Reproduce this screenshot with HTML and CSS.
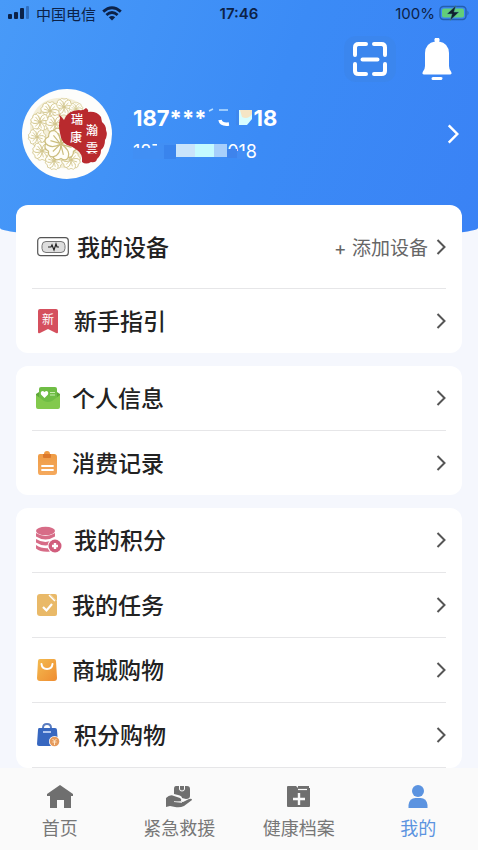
FILE: index.html
```html
<!DOCTYPE html>
<html lang="zh-CN">
<head>
<meta charset="utf-8">
<meta name="viewport" content="width=device-width, initial-scale=1">
<title>我的</title>
<link rel="stylesheet" href="styles.css">
</head>
<body>
<svg class="defs" aria-hidden="true">
  <symbol id="chevron" viewBox="0 0 10 18"><path d="M1.5 2 8.500 9 1.500 16" fill="none" stroke="currentColor" stroke-width="2"/></symbol>
</svg>
<div class="app">
  <div class="scroll">
    <header class="hero">
      <div class="status">
        <div class="status-side">
          <svg width="22" height="14" viewBox="0 0 22 14"><g fill="#0c2248"><rect x="0" y="8" width="4" height="5" rx="1"/><rect x="6" y="6" width="4" height="7" rx="1"/><rect x="12" y="2" width="4" height="11" rx="1"/></g><rect x="18" y="0" width="3" height="13" rx="1" fill="#2f6fc0"/></svg>
          <span class="carrier">中国电信</span>
          <svg width="20" height="15" viewBox="0 0 20 15"><g fill="none" stroke="#0c2248" stroke-width="2.800"><path d="M1.200 5.600Q10-2.200 18.800 5.600"/><path d="M4.400 9Q10 4 15.600 9"/></g><path d="M6.800 11.300Q10 8.600 13.200 11.300L10 14.500z" fill="#0c2248"/></svg>
        </div>
        <time class="clock">17:46</time>
        <div class="status-side status-end">
          <span class="percent">100%</span>
          <svg width="31" height="16" viewBox="0 0 31 16"><rect x="1" y="1.500" width="26" height="13" rx="3.500" fill="none" stroke="#245fae" stroke-width="1.400"/><rect x="3" y="3.500" width="22" height="9" rx="1.800" fill="#62ce79"/><path d="M28.500 5.500q2 2.500 0 5z" fill="#245fae"/><path d="M17 .5 8 9h5l-2 6.500L20 7h-5z" fill="#10202c" stroke="#4a9c9f" stroke-width=".5"/></svg>
        </div>
      </div>
      <div class="tools">
        <button class="tool tool-scan" aria-label="扫一扫"><svg width="34" height="34" viewBox="0 0 34 34"><g fill="none" stroke="#fff" stroke-width="4" stroke-linecap="round" stroke-linejoin="round"><path d="M2 13V5.500Q2 2 5.500 2H13M21 2h7.500Q32 2 32 5.500V13M32 22v7q0 3-3.500 3H21M13 32H5.500Q2 32 2 29v-7M9.500 17.500h15"/></g></svg></button>
        <button class="tool tool-bell" aria-label="消息"><svg width="32" height="42" viewBox="0 0 32 42"><path d="M14 0h4q1.500 2 0 3.500 9.500 1.500 10 11.500v13q0 3 2 5.500 1.500 3-1 3H3q-2.500 0-1-3 2-2.500 2-5.500V15Q4.500 5 14 3.500 12.500 2 14 0zM12 39h8q2 0 1.500 1.500T20 42h-8q-1.500 0-1.500-1.500T12 39z" fill="#fff"/></svg></button>
      </div>
      <a class="profile" href="#profile">
        <svg class="avatar" viewBox="0 0 90 90">
          <defs>
            <g id="petal" fill="#fffef8" stroke="#cbbd7d" stroke-width="1"><path d="M0 0Q-8-5-6-11-4-15 0-12 5-15 7-10 7-5 0 0zM0-1-2-9M0-1 3-9"/></g>
            <g id="flower"><use href="#petal"/><use href="#petal" transform="rotate(60)"/><use href="#petal" transform="rotate(120)"/><use href="#petal" transform="rotate(180)"/><use href="#petal" transform="rotate(240)"/><use href="#petal" transform="rotate(300)"/></g>
          </defs>
          <circle cx="45" cy="45" r="45" fill="#fdfdfb"/>
          <path d="M44 9C16 6 5 28 9 47c3 23 25 38 43 30 9-4 9-13 3-21L41 38C42 27 51 22 62 19 58 13 51 10 44 9z" fill="#f4efd9"/>
          <use href="#flower" transform="translate(42 18) scale(.65)"/><use href="#flower" transform="translate(28 22) scale(.7)"/><use href="#flower" transform="translate(54 20) scale(.5)"/>
          <use href="#flower" transform="translate(18 33) scale(.7)"/><use href="#flower" transform="translate(15 48) scale(.65)"/><use href="#flower" transform="translate(20 62) scale(.7)"/><use href="#flower" transform="translate(32 72) scale(.65)"/><use href="#flower" transform="translate(49 71) scale(.7)"/><use href="#flower" transform="translate(33 35) scale(.7)"/>
          <use href="#flower" transform="translate(39 55) scale(1.200)"/>
          <path d="M42 31Q46 21 57 21q4 1 7-2 3 2 2 4 9-1 13 5l1 5q4 3 4 8 2 5-1 10 0 7-4 10 0 6-4 9-1 4-6 3-5 3-9 0 1-8-5-12-5-4-10-5-6-3-7-12-2-7 0-15l-1-4z" fill="#b92a2e"/>
          <g class="seal"><text x="49" y="35">瑞</text><text x="48" y="53">康</text><text x="64" y="46">瀚</text><text x="64" y="64">雲</text></g>
        </svg>
        <div class="identity">
          <div class="name"><span>187***</span><svg class="mask" width="47" height="20" viewBox="0 0 47 20"><path d="M2 3l4-2M12 2h9" stroke="#b9deff" stroke-width="1.500"/><path d="M13 12q1 5 9 4" fill="none" stroke="#fff" stroke-width="3.500"/><path d="M29 2h4v15h-4z" fill="#3e87ed"/><path d="M32 2h13v9l-5 6h-8z" fill="#d7fdff"/><path d="M33 2h12v4q-4 6-10 3z" fill="#f5e5c5"/></svg><span>18</span></div>
          <div class="phone"><div class="digits"><span>187</span><span>018</span></div><svg class="phone-mask" viewBox="0 0 124 20"><path d="M0 7h24V2h20v16H0z" fill="#418ff4"/><path d="M31 4h12v14H31z" fill="#3984ed"/><path d="M43 3h19v13H43z" fill="#c9e4fb"/><path d="M62 3h19v13H62z" fill="#c4faff"/><path d="M81 3h13v13H81z" fill="#a7cffb"/><path d="M94 8h10v9H94z" fill="#3e83ec"/><path d="M104 10h8v8h-8z" fill="#428cf4"/></svg></div>
        </div>
        <svg class="profile-arrow"><use href="#chevron"/></svg>
      </a>
    </header>
    <main class="cards">
      <section class="card">
        <a class="row row-device" href="#devices">
          <svg width="32" height="20" viewBox="0 0 32 20"><rect x=".7" y=".7" width="30.600" height="18" rx="3" fill="#fff" stroke="#555" stroke-width="1.200"/><rect x="5" y="4.500" width="23" height="11" rx="4" fill="#dedede" stroke="#777"/><path d="M11 10h3l1-2 2 5 2-6 1 3h2" fill="none" stroke="#222" stroke-width="1.200"/></svg>
          <span class="label">我的设备</span><span class="extra">+ 添加设备</span><svg class="arrow"><use href="#chevron"/></svg>
        </a>
        <a class="row row-wide" href="#guide">
          <svg width="26" height="26" viewBox="0 0 26 26"><path d="M4 1h16q2 0 2 2v21q0 2-2 1l-8-4-8 4q-2 1-2-1V3q0-2 2-2z" fill="#d5505e"/><text class="badge-text" x="6" y="16">新</text></svg>
          <span class="label">新手指引</span><svg class="arrow"><use href="#chevron"/></svg>
        </a>
      </section>
      <section class="card">
        <a class="row" href="#info">
          <svg width="24" height="24" viewBox="0 0 24 24"><path d="M0 8 3 6v9H0zM24 8l-3-2v9h3z" fill="#5fa73a"/><rect x="3" y="1" width="18" height="17" rx="2" fill="#6fbd45"/><path d="M0 9l8 6q4 2 8 0l8-6v12q0 2-2 2H2q-2 0-2-2z" fill="#83c94d"/><path d="M8.500 12 5 8.500Q4 5 7 5l1.500 1L10 5q3 0 2 3.500z" fill="#fff"/><path d="M14 6.500h5M14 9h5" stroke="#c8edaf" stroke-width="1.200"/></svg>
          <span class="label">个人信息</span><svg class="arrow"><use href="#chevron"/></svg>
        </a>
        <a class="row" href="#orders">
          <svg width="24" height="24" viewBox="0 0 24 24"><defs><linearGradient id="og" x2="0" y2="1"><stop stop-color="#ee9a42"/><stop offset="1" stop-color="#f5a95d"/></linearGradient></defs><path d="M4 3h4q0-3 3-3t3 3h4q3 0 3 3v15q0 3-3 3H4q-2 0-2-3V5q0-2 2-2z" fill="url(#og)"/><path d="M7 3h8v3q0 1-1 1H8Q7 7 7 6z" fill="#dc792c"/><path d="M6 15h11M6 19h11" stroke="#fff" stroke-width="1.800" stroke-linecap="round"/></svg>
          <span class="label">消费记录</span><svg class="arrow"><use href="#chevron"/></svg>
        </a>
      </section>
      <section class="card card-last">
        <a class="row row-wide" href="#points">
          <svg width="26" height="28" viewBox="0 0 26 28"><g fill="#d76c87"><ellipse cx="9.500" cy="5" rx="9.500" ry="4.200"/><path d="M0 7q9.500 6 19 0v3.500q-9.500 6-19 0zM0 13q9.500 6 19 0v3.500q-9.500 6-19 0zM0 19q6 4 14 3v3.500q-9 1-14-3z"/></g><circle cx="19" cy="20" r="7.500" fill="#fff"/><circle cx="19" cy="20" r="6.500" fill="#d15d7d"/><path d="M19 17v6M16 20h6" stroke="#fff" stroke-width="2.400"/></svg>
          <span class="label">我的积分</span><svg class="arrow"><use href="#chevron"/></svg>
        </a>
        <a class="row" href="#tasks">
          <svg width="24" height="24" viewBox="0 0 24 24"><path d="M4 1h10l7 7v13q0 2-2 2H4q-3 0-3-3V4q0-3 3-3z" fill="#e9b968"/><path d="M14 1h5q2 0 2 2v5z" fill="#e9b968"/><path d="M13 2l6 6" fill="none" stroke="#fff" stroke-width="1.500"/><path d="m7 14 3.500 3.500L16 11" fill="none" stroke="#fff" stroke-width="2.200"/></svg>
          <span class="label">我的任务</span><svg class="arrow"><use href="#chevron"/></svg>
        </a>
        <a class="row" href="#mall">
          <svg width="24" height="24" viewBox="0 0 24 24"><defs><linearGradient id="bag" x2="1" y2="1"><stop stop-color="#f3bb50"/><stop offset="1" stop-color="#ef8c31"/></linearGradient></defs><path d="M4 1h14q2 0 2 2l1 17q0 3-3 3H4q-3 0-3-3L2 3q0-2 2-2z" fill="url(#bag)"/><path d="M5.500 6q.5 5 5.500 5t5.500-5" fill="none" stroke="#fff" stroke-width="2" stroke-linecap="round"/></svg>
          <span class="label">商城购物</span><svg class="arrow"><use href="#chevron"/></svg>
        </a>
        <a class="row row-wide" href="#exchange">
          <svg width="26" height="24" viewBox="0 0 26 24"><path d="M7 8V5q0-4 4-4t4 4v3" fill="none" stroke="#5a7cc0" stroke-width="2"/><path d="M3 5h16q2 0 2 2l1 14q0 2-2 2H3q-2 0-2-2L2 7q0-2 1-2z" fill="#3767c0"/><path d="M7 9h8" stroke="#d9e5ff" stroke-width="1.500"/><circle cx="18.500" cy="18.500" r="5.500" fill="#fff"/><circle cx="18.500" cy="18.500" r="4.800" fill="#e59a5c"/><path d="m16.500 16 2 2 2-2M18.500 18v4M16.500 19h4" fill="none" stroke="#ffe6c7"/></svg>
          <span class="label">积分购物</span><svg class="arrow"><use href="#chevron"/></svg>
        </a>
      </section>
    </main>
  </div>
  <nav class="tabs">
    <a href="#home"><svg viewBox="0 0 26 24"><path d="M13 0 26 9v2h-2v12h-7v-8H10v8H3V11H0V9z" fill="#6f6f6f"/></svg><span>首页</span></a>
    <a href="#rescue"><svg viewBox="0 0 26 24"><path d="M10 1h11q3 0 3 3v7q0 3-4 3l-4-1q0-2-4-3L8 9V4q0-3 2-3z" fill="#6f6f6f"/><path d="M13.500 1v3q0 2 2.500 2t2.500-2V1" fill="none" stroke="#fafafa" stroke-width="1"/><path d="M0 13q4-4 8-2l6 2q2 1 1 3H9l8 1 6-3q3-1 3 1l-8 6q-4 2-9 1l-5-1-4 1z" fill="#6f6f6f"/><path d="M8 16.500l8 1" stroke="#fafafa" stroke-width=".8"/></svg><span>紧急救援</span></a>
    <a href="#records"><svg viewBox="0 0 26 24"><path d="M2 1h8l2 2h12v18q0 1-1 1H2q-1 0-1-1V2q0-1 1-1z" fill="#6f6f6f"/><path d="M12 1h11v2H12z" fill="#6f6f6f"/><path d="M12 4.500h9" stroke="#fafafa" stroke-width="1.200"/><path d="M13 8v12M7 14h12" stroke="#fafafa" stroke-width="2.400"/></svg><span>健康档案</span></a>
    <a class="active" href="#me" aria-current="page"><svg viewBox="0 0 26 24"><circle cx="13" cy="6" r="6" fill="#5b93e0"/><path d="M3.500 23v-3q1-7 7-7h5q6 0 7 7v3z" fill="#5b93e0"/></svg><span>我的</span></a>
  </nav>
</div>
</body>
</html>
```
FILE: styles.css
```css
* { box-sizing: border-box; }
body {
  margin: 0;
  background: #f5f7fd;
  color: #222;
  font-family: Inter, "Noto Sans CJK SC", sans-serif;
}
a { color: inherit; text-decoration: none; }
svg { display: block; flex: none; }
button { border: 0; padding: 0; background: none; }
.defs { width: 0; height: 0; position: absolute; }

.app { display: flex; flex-direction: column; height: 100vh; }
.scroll { flex: 1; min-height: 0; overflow-y: auto; scrollbar-width: none; }

/* Blue header with a curved lower edge that runs behind the first card */
.hero {
  height: 240px;
  background: linear-gradient(110deg, #489af8, #3b8bf6 55%, #3a82f5);
  border-radius: 0 0 50% 50% / 0 0 12px 12px;
  color: #fff;
}
.status {
  display: grid;
  grid-template-columns: 1fr auto 1fr;
  align-items: center;
  height: 26px;
  padding: 0 8px;
  color: #0c2248;
  font-size: 15px;
}
.status-side { display: flex; align-items: center; gap: 6px; }
.status-end { justify-content: flex-end; gap: 4px; }
.clock { font-weight: 600; }
.tools {
  display: flex;
  justify-content: flex-end;
  align-items: center;
  gap: 24px;
  padding: 10px 24px 0 0;
}
.tool { display: grid; place-items: center; height: 46px; }
.tool-scan { width: 52px; border-radius: 12px; background: #3b86ee; }
.tool-bell { width: 34px; }

.profile {
  display: flex;
  align-items: center;
  gap: 21px;
  padding: 7px 18px 0 22px;
}
.avatar { width: 90px; height: 90px; }
.seal { fill: #fff; font-size: 12px; font-weight: 500; font-family: "Noto Sans CJK TC", sans-serif; }
.identity { flex: 1; padding-top: 2px; }
.name {
  display: flex;
  align-items: center;
  height: 32px;
  font-size: 22px;
  font-weight: 700;
}
.phone { display: grid; justify-content: start; align-items: center; height: 34px; font-size: 18px; }
.phone > * { grid-area: 1 / 1; }
.digits { display: flex; justify-content: space-between; width: 124px; }
.phone-mask { width: 124px; height: 20px; }
.profile-arrow { width: 14px; height: 22px; }

.cards { display: grid; gap: 13px; margin-top: -35px; padding: 0 16px; }
.card { padding: 0 16px; border-radius: 12px; background: #fff; }
.row {
  display: flex;
  align-items: center;
  gap: 12px;
  height: 65px;
  padding-left: 4px;
  border-bottom: 1px solid #e6e6e8;
}
.row:last-child { height: 64px; border-bottom: 0; }
.row-device { height: 84px; gap: 8px; padding-left: 5px; }
.card-last .row:last-child { height: 65px; border-bottom: 1px solid #e6e6e8; }
.label { flex: 1; padding-bottom: 2px; font-size: 23px; font-weight: 500; }
.extra { color: #666; font-size: 19px; }
.arrow { width: 10px; height: 18px; color: #555; }
.badge-text { fill: #fff; font-size: 12px; }

.tabs {
  display: grid;
  grid-template-columns: repeat(4, 1fr);
  height: 82px;
  background: #fafafa;
}
.tabs a {
  display: flex;
  flex-direction: column;
  align-items: center;
  gap: 7px;
  padding-top: 17px;
  color: #777;
  font-size: 18px;
  line-height: 26px;
}
.tabs svg { width: 26px; height: 24px; }
.tabs .active { color: #5b93e0; }
```
